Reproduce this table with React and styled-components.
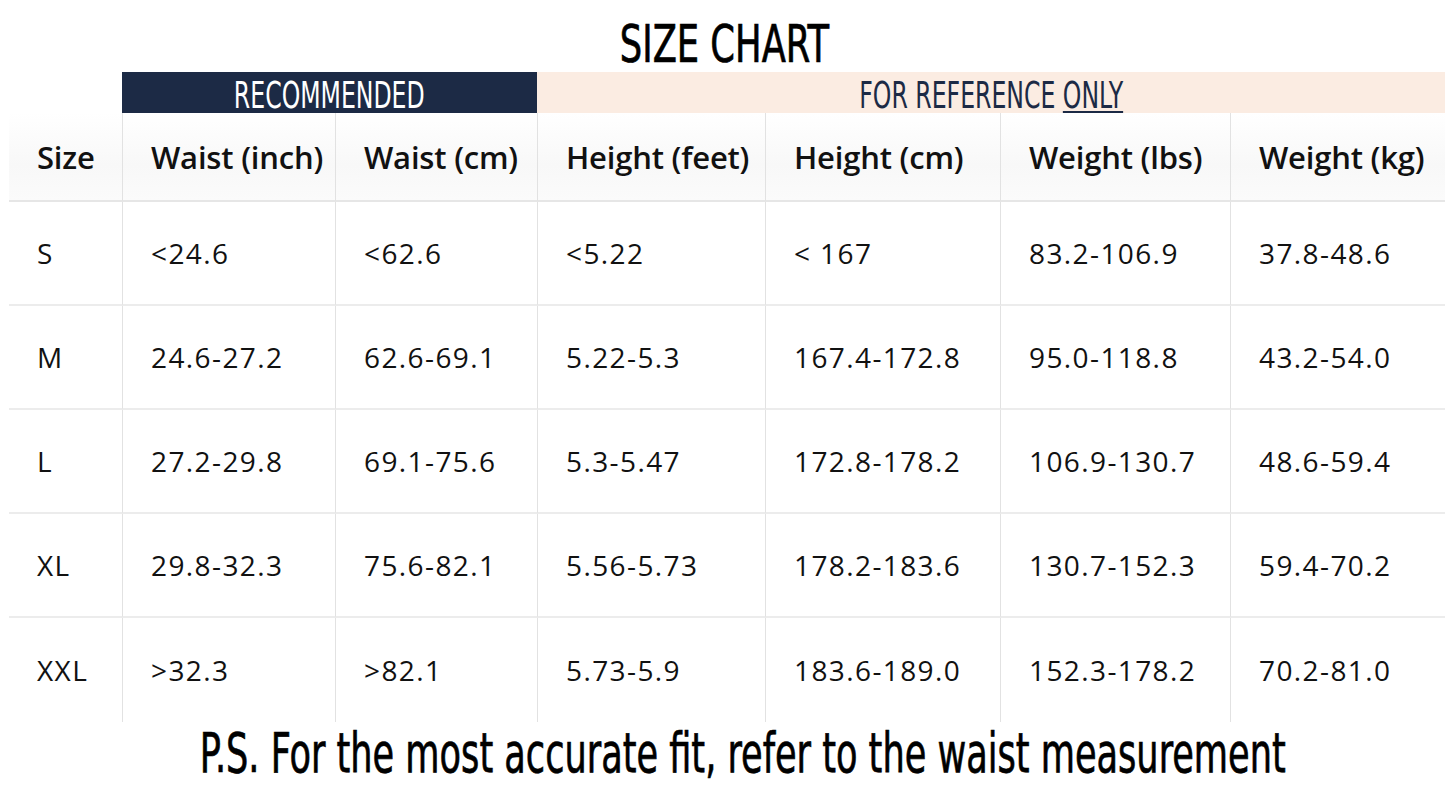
import React from 'react';
import styled, { createGlobalStyle } from 'styled-components';

const GlobalStyle = createGlobalStyle`
  html, body {
    margin: 0;
    padding: 0;
    background: #ffffff;
  }
  body {
    font-family: 'Open Sans', 'Noto Sans', sans-serif;
    color: #111111;
  }
`;

const headers = [
  'Size',
  'Waist (inch)',
  'Waist (cm)',
  'Height (feet)',
  'Height (cm)',
  'Weight (lbs)',
  'Weight (kg)',
];

const rows = [
  ['S', '<24.6', '<62.6', '<5.22', '< 167', '83.2-106.9', '37.8-48.6'],
  ['M', '24.6-27.2', '62.6-69.1', '5.22-5.3', '167.4-172.8', '95.0-118.8', '43.2-54.0'],
  ['L', '27.2-29.8', '69.1-75.6', '5.3-5.47', '172.8-178.2', '106.9-130.7', '48.6-59.4'],
  ['XL', '29.8-32.3', '75.6-82.1', '5.56-5.73', '178.2-183.6', '130.7-152.3', '59.4-70.2'],
  ['XXL', '>32.3', '>82.1', '5.73-5.9', '183.6-189.0', '152.3-178.2', '70.2-81.0'],
];

const App = () => {
  return (
    <>
      <GlobalStyle />
      <Page>
        <Title>
          <span>SIZE CHART</span>
        </Title>
        <Table>
          <Blank />
          <Banner $dark $span={2}>
            <span>RECOMMENDED</span>
          </Banner>
          <Banner $span={4}>
            <span>
              FOR REFERENCE <u>ONLY</u>
            </span>
          </Banner>
          {headers.map((h, i) => (
            <HeadCell key={h} $first={i === 0}>
              {h}
            </HeadCell>
          ))}
          {rows.map((row, r) =>
            row.map((value, c) => (
              <Cell
                key={`${r}-${c}`}
                $first={c === 0}
                $last={r === rows.length - 1}
              >
                {value}
              </Cell>
            ))
          )}
        </Table>
        <Footer>
          <span>P.S. For the most accurate fit, refer to the waist measurement</span>
        </Footer>
      </Page>
    </>
  );
};

// Styled components
const Page = styled.div`
  width: 1445px;
  height: 802px;
  overflow: hidden;
  display: flex;
  flex-direction: column;
`;

const condensed = `
  font-family: 'Liberation Sans Narrow', 'DejaVu Sans Condensed', 'DejaVu Sans', sans-serif;
  font-stretch: condensed;
`;

const Title = styled.h1`
  ${condensed}
  margin: 0;
  height: 72px;
  display: flex;
  justify-content: center;
  align-items: center;

  span {
    display: inline-block;
    font-size: 51px;
    font-weight: 400;
    color: #000000;
    transform: scale(0.77, 1);
    line-height: 1;
    padding-top: 17px;
    padding-left: 4px;
    -webkit-text-stroke: 0.7px #000000;
  }
`;

const Table = styled.div`
  margin-left: 9px;
  display: grid;
  grid-template-columns: 113px 213px 202px 228px 235px 230px 215px;
  grid-template-rows: 41px 89px repeat(5, 104px);
`;

const Blank = styled.div``;

const Banner = styled.div`
  ${condensed}
  grid-column: span ${(p) => p.$span};
  background: ${(p) => (p.$dark ? '#1c2a45' : '#fbece2')};
  color: ${(p) => (p.$dark ? '#ffffff' : '#1c2a45')};
  display: flex;
  justify-content: center;
  align-items: center;

  span {
    display: inline-block;
    font-size: 38px;
    line-height: 1;
    transform: scale(0.69, 1);
    white-space: nowrap;
    padding-top: 4px;
  }

  u {
    text-decoration-thickness: 2px;
    text-underline-offset: 3px;
  }
`;

const HeadCell = styled.div`
  background: linear-gradient(#ffffff, #f8f8f8 60%, #fbfbfb);
  border-left: ${(p) => (p.$first ? 'none' : '1px solid #e2e2e2')};
  border-bottom: 2px solid #e6e6e6;
  padding-left: 28px;
  display: flex;
  align-items: center;
  font-size: 31px;
  font-weight: 600;
  color: #111111;
  white-space: nowrap;
  letter-spacing: -0.2px;
`;

const Cell = styled.div`
  background: #ffffff;
  border-left: ${(p) => (p.$first ? 'none' : '1px solid #e2e2e2')};
  border-bottom: ${(p) => (p.$last ? 'none' : '2px solid #ececec')};
  padding-left: 28px;
  display: flex;
  align-items: center;
  font-size: 28px;
  font-weight: 400;
  color: #111111;
  white-space: nowrap;
  letter-spacing: 1.4px;
`;

const Footer = styled.div`
  ${condensed}
  flex: 1;
  display: flex;
  justify-content: center;
  align-items: center;
  padding-left: 40px;
  padding-bottom: 18px;

  span {
    display: inline-block;
    font-size: 55px;
    line-height: 1;
    color: #000000;
    transform: scale(0.71, 1);
    white-space: nowrap;
    -webkit-text-stroke: 0.7px #000000;
  }
`;

export default App;
